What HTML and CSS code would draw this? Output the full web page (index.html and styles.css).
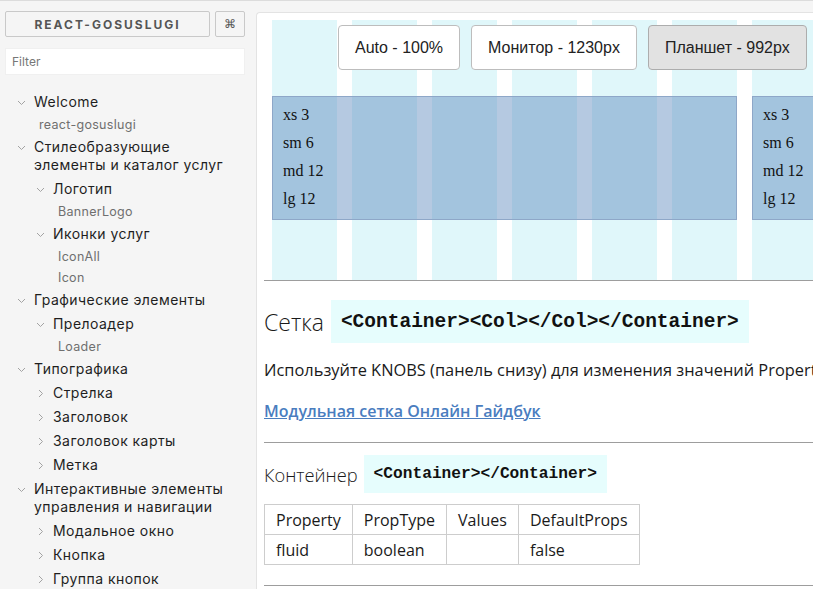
FILE: index.html
```html
<!DOCTYPE html>
<html lang="ru">
<head>
<meta charset="utf-8">
<title>React-gosuslugi</title>
<link rel="stylesheet" href="styles.css">
</head>
<body>
<div class="app">
  <aside class="sidebar">
    <div class="brand-row">
      <button class="brand">REACT-GOSUSLUGI</button>
      <button class="shortcut">⌘</button>
    </div>
    <input class="filter" type="text" placeholder="Filter">
    <div class="tree">
      <div class="row branch l1"><span class="chev"><svg width="9" height="9" viewBox="0 0 9 9"><path d="M1 3 L4.5 6.5 L8 3"/></svg></span><span class="label">Welcome</span></div>
      <div class="row leaf l1">react-gosuslugi</div>
      <div class="row branch l1"><span class="chev"><svg width="9" height="9" viewBox="0 0 9 9"><path d="M1 3 L4.5 6.5 L8 3"/></svg></span><span class="label">Стилеобразующие элементы и каталог услуг</span></div>
      <div class="row branch l2"><span class="chev"><svg width="9" height="9" viewBox="0 0 9 9"><path d="M1 3 L4.5 6.5 L8 3"/></svg></span><span class="label">Логотип</span></div>
      <div class="row leaf l2">BannerLogo</div>
      <div class="row branch l2"><span class="chev"><svg width="9" height="9" viewBox="0 0 9 9"><path d="M1 3 L4.5 6.5 L8 3"/></svg></span><span class="label">Иконки услуг</span></div>
      <div class="row leaf l2">IconAll</div>
      <div class="row leaf l2">Icon</div>
      <div class="row branch l1"><span class="chev"><svg width="9" height="9" viewBox="0 0 9 9"><path d="M1 3 L4.5 6.5 L8 3"/></svg></span><span class="label">Графические элементы</span></div>
      <div class="row branch l2"><span class="chev"><svg width="9" height="9" viewBox="0 0 9 9"><path d="M1 3 L4.5 6.5 L8 3"/></svg></span><span class="label">Прелоадер</span></div>
      <div class="row leaf l2">Loader</div>
      <div class="row branch l1"><span class="chev"><svg width="9" height="9" viewBox="0 0 9 9"><path d="M1 3 L4.5 6.5 L8 3"/></svg></span><span class="label">Типографика</span></div>
      <div class="row branch l2"><span class="chev"><svg width="9" height="9" viewBox="0 0 9 9"><path d="M3 1 L6.5 4.5 L3 8"/></svg></span><span class="label">Стрелка</span></div>
      <div class="row branch l2"><span class="chev"><svg width="9" height="9" viewBox="0 0 9 9"><path d="M3 1 L6.5 4.5 L3 8"/></svg></span><span class="label">Заголовок</span></div>
      <div class="row branch l2"><span class="chev"><svg width="9" height="9" viewBox="0 0 9 9"><path d="M3 1 L6.5 4.5 L3 8"/></svg></span><span class="label">Заголовок карты</span></div>
      <div class="row branch l2"><span class="chev"><svg width="9" height="9" viewBox="0 0 9 9"><path d="M3 1 L6.5 4.5 L3 8"/></svg></span><span class="label">Метка</span></div>
      <div class="row branch l1"><span class="chev"><svg width="9" height="9" viewBox="0 0 9 9"><path d="M1 3 L4.5 6.5 L8 3"/></svg></span><span class="label">Интерактивные элементы управления и навигации</span></div>
      <div class="row branch l2"><span class="chev"><svg width="9" height="9" viewBox="0 0 9 9"><path d="M3 1 L6.5 4.5 L3 8"/></svg></span><span class="label">Модальное окно</span></div>
      <div class="row branch l2"><span class="chev"><svg width="9" height="9" viewBox="0 0 9 9"><path d="M3 1 L6.5 4.5 L3 8"/></svg></span><span class="label">Кнопка</span></div>
      <div class="row branch l2"><span class="chev"><svg width="9" height="9" viewBox="0 0 9 9"><path d="M3 1 L6.5 4.5 L3 8"/></svg></span><span class="label">Группа кнопок</span></div>
    </div>
  </aside>
  <main class="preview">
    <div class="content">
      <div class="stage">
        <div class="gcol c1"></div><div class="gcol c2"></div><div class="gcol c3"></div><div class="gcol c4"></div>
        <div class="gcol c5"></div><div class="gcol c6"></div><div class="gcol c7"></div><div class="gcol c8"></div>
        <div class="gcol c9"></div><div class="gcol c10"></div><div class="gcol c11"></div><div class="gcol c12"></div>
        <div class="cell first">
          <p>xs 3</p><p>sm 6</p><p>md 12</p><p>lg 12</p>
        </div>
        <div class="cell second">
          <p>xs 3</p><p>sm 6</p><p>md 12</p><p>lg 12</p>
        </div>
        <div class="switcher">
          <button class="size-btn">Auto - 100%</button>
          <button class="size-btn">Монитор - 1230px</button>
          <button class="size-btn active">Планшет - 992px</button>
        </div>
      </div>
      <hr class="rule">
      <div class="title big">
        <h2>Сетка</h2>
        <code class="code">&lt;Container&gt;&lt;Col&gt;&lt;/Col&gt;&lt;/Container&gt;</code>
      </div>
      <p class="text">Используйте KNOBS (панель снизу) для изменения значений Properties компонентов сетки</p>
      <p class="link-line"><a href="#">Модульная сетка Онлайн Гайдбук</a></p>
      <hr class="rule r2">
      <div class="title small">
        <h3>Контейнер</h3>
        <code class="code">&lt;Container&gt;&lt;/Container&gt;</code>
      </div>
      <table class="props">
        <tr><th>Property</th><th>PropType</th><th>Values</th><th>DefaultProps</th></tr>
        <tr><td>fluid</td><td>boolean</td><td></td><td>false</td></tr>
      </table>
      <hr class="rule r3">
    </div>
  </main>
</div>
</body>
</html>
```
FILE: styles.css
```css
html, body {
  margin: 0;
  padding: 0;
}
body {
  background: #f5f5f5;
  font-family: Inter, "Liberation Sans", sans-serif;
  color: #222;
}
.app {
  display: flex;
  height: 589px;
  box-sizing: border-box;
  border-top: 1px solid #dcdcdc;
  overflow: hidden;
}

/* Sidebar */
.sidebar {
  width: 256px;
  flex: none;
  box-sizing: border-box;
  padding: 10px 11px 0 5px;
}
.brand-row {
  display: flex;
  gap: 5px;
  height: 26px;
}
.brand {
  width: 205px;
  height: 26px;
  box-sizing: border-box;
  border: 1px solid #c9c9c9;
  border-radius: 2px;
  background: transparent;
  font-family: Inter, "Liberation Sans", sans-serif;
  font-weight: 700;
  font-size: 12px;
  letter-spacing: 2px;
  color: #555;
  padding: 0;
}
.shortcut {
  width: 30px;
  height: 26px;
  box-sizing: border-box;
  border: 1px solid #c9c9c9;
  border-radius: 2px;
  background: transparent;
  font-size: 12px;
  color: #555;
  padding: 0;
}
.filter {
  display: block;
  margin-top: 11px;
  width: 240px;
  height: 27px;
  box-sizing: border-box;
  border: 1px solid #f0f0f0;
  background: #fff;
  padding: 0 6px;
  font-family: Inter, "Liberation Sans", sans-serif;
  font-size: 12px;
  color: #333;
  outline: none;
}
.filter::placeholder {
  color: #777;
}
.tree {
  margin-top: 15px;
}
.row {
  display: flex;
  align-items: flex-start;
}
.branch {
  padding-top: 3px;
  padding-bottom: 3px;
  font-size: 14px;
  letter-spacing: 0.45px;
  line-height: 18px;
  color: #1e1e1e;
}
.branch.l1 { padding-left: 12px; }
.branch.l2 { padding-left: 31px; }
.chev {
  width: 9px;
  height: 18px;
  flex: none;
  display: flex;
  align-items: center;
  margin-right: 8px;
}
.chev svg {
  display: block;
}
.chev path {
  fill: none;
  stroke: #a3a3a3;
  stroke-width: 1;
}
.leaf {
  font-size: 12.5px;
  letter-spacing: 0.3px;
  line-height: 21px;
  color: #6f6f6f;
}
.leaf.l1 { padding-left: 34px; }
.leaf.l2 { padding-left: 53px; }

/* Preview */
.preview {
  flex: 1;
  min-width: 0;
  margin-top: 11px;
  background: #fff;
  border-left: 1px solid #e3e3e3;
  border-top: 1px solid #e3e3e3;
  border-top-left-radius: 4px;
  overflow: hidden;
}
.content {
  width: 1000px;
  padding: 7px 0 0 7px;
  font-family: "Open Sans", sans-serif;
  color: #1a1a1a;
}
.stage {
  position: relative;
  display: grid;
  grid-template-columns: repeat(12, 65px);
  grid-template-rows: 76px 124px 60px;
  column-gap: 15px;
  margin-left: 8px;
}
.gcol {
  grid-row: 1 / -1;
  background: #e0f7fa;
}
.c1 { grid-column: 1; } .c2 { grid-column: 2; } .c3 { grid-column: 3; } .c4 { grid-column: 4; }
.c5 { grid-column: 5; } .c6 { grid-column: 6; } .c7 { grid-column: 7; } .c8 { grid-column: 8; }
.c9 { grid-column: 9; } .c10 { grid-column: 10; } .c11 { grid-column: 11; } .c12 { grid-column: 12; }
.cell {
  grid-row: 2;
  box-sizing: border-box;
  background: rgba(79, 126, 183, 0.42);
  border: 1px solid #8ea7c8;
  padding: 4px 10px 6px;
  font-family: "Liberation Serif", serif;
  font-size: 16px;
  color: #111;
}
.cell.first { grid-column: 1 / 7; }
.cell.second { grid-column: 7 / 13; }
.cell p {
  margin: 0;
  line-height: 28px;
}
.switcher {
  position: absolute;
  top: 5px;
  left: 66px;
  display: flex;
  gap: 11px;
}
.size-btn {
  height: 45px;
  box-sizing: border-box;
  padding: 0 16px;
  border: 1px solid #bdbdbd;
  border-radius: 4px;
  background: #fff;
  font-family: "Liberation Sans", sans-serif;
  font-size: 16px;
  color: #222;
}
.size-btn.active {
  background: #e2e2e2;
  border-color: #adadad;
}
.rule {
  border: 0;
  border-top: 1px solid #9d9d9d;
  margin: 0;
  height: 0;
}
.title {
  display: flex;
  align-items: center;
}
.title.big {
  margin-top: 19px;
  gap: 7px;
}
.title.small {
  margin-top: 12px;
  gap: 6px;
}
.title h2 {
  margin: 0;
  font-weight: 300;
  font-size: 23px;
}
.title h3 {
  margin: 0;
  font-weight: 300;
  font-size: 18.3px;
}
.code {
  display: flex;
  align-items: center;
  background: #e6fdfd;
  padding: 0 10px;
  font-family: "Liberation Mono", monospace;
  font-weight: 700;
  color: #111;
}
.big .code {
  height: 43px;
  font-size: 19.5px;
}
.small .code {
  height: 38px;
  font-size: 16.2px;
}
.text {
  margin: 15px 0 0;
  font-size: 16.4px;
  line-height: 24px;
  white-space: nowrap;
}
.link-line {
  margin: 17px 0 0;
  font-size: 16px;
  line-height: 24px;
}
.link-line a {
  color: #4a7dbf;
  font-weight: 600;
  text-decoration: underline;
}
.r2 { margin-top: 19px; }
.props {
  margin-top: 11px;
  border-collapse: collapse;
  font-size: 16px;
}
.props th, .props td {
  border: 1px solid #cdcdcd;
  height: 30px;
  padding: 0 11px;
  text-align: left;
  box-sizing: border-box;
}
.props th {
  font-weight: 500;
}
.props td {
  font-weight: 400;
}
.r3 { margin-top: 20px; }
```
